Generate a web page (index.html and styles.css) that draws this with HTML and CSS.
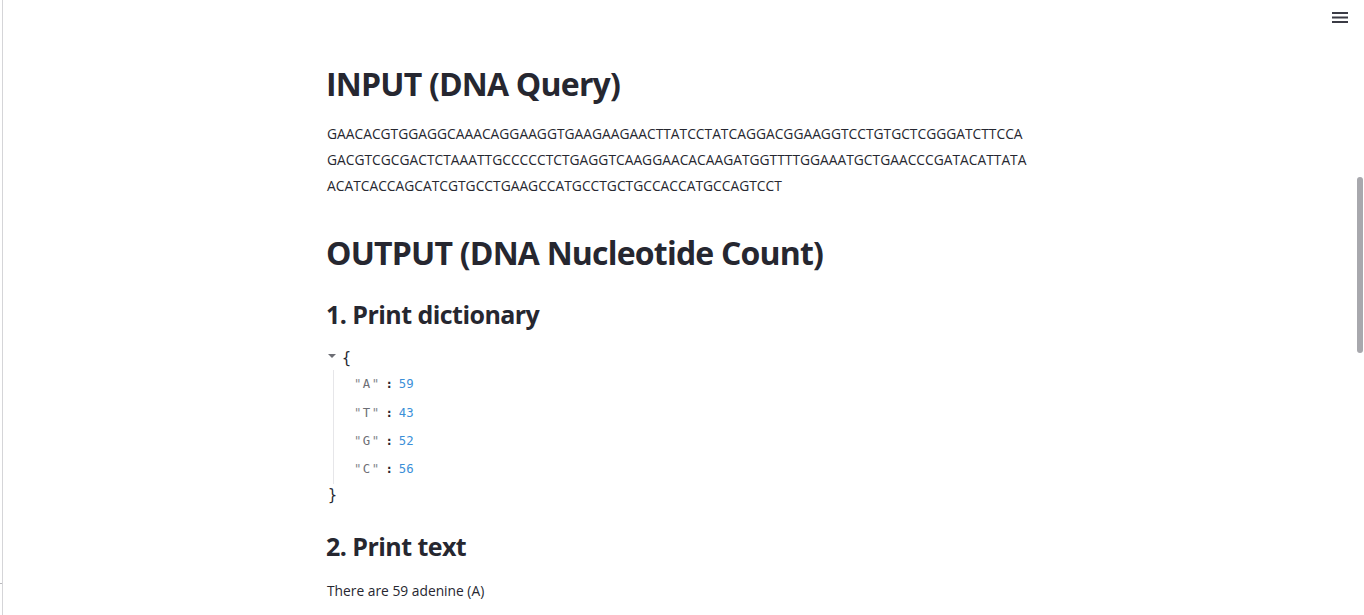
FILE: index.html
```html
<!DOCTYPE html>
<html lang="en">
<head>
<meta charset="utf-8">
<title>DNA Nucleotide Count</title>
<link rel="stylesheet" href="styles.css">
</head>
<body>
<div class="app">
  <div class="sidebar-edge"><span class="edge-tick"></span></div>
  <main class="main">
    <header class="toolbar">
      <button class="menu-btn" aria-label="Main menu">
        <svg width="16" height="11" viewBox="0 0 16 11"><rect x="0" y="0" width="16" height="2"/><rect x="0" y="4.5" width="16" height="2"/><rect x="0" y="9" width="16" height="2"/></svg>
      </button>
    </header>
    <div class="block">
      <h1 class="h1 h1-first">INPUT (DNA Query)</h1>
      <p class="dna">GAACACGTGGAGGCAAACAGGAAGGTGAAGAAGAACTTATCCTATCAGGACGGAAGGTCCTGTGCTCGGGATCTTCCA<br>GACGTCGCGACTCTAAATTGCCCCCTCTGAGGTCAAGGAACACAAGATGGTTTTGGAAATGCTGAACCCGATACATTATA<br>ACATCACCAGCATCGTGCCTGAAGCCATGCCTGCTGCCACCATGCCAGTCCT</p>
      <h1 class="h1 h1-second">OUTPUT (DNA Nucleotide Count)</h1>
      <h3 class="h3 h3-first">1. Print dictionary</h3>
      <div class="json">
        <div class="json-row json-open"><span class="caret"></span><span class="brace">{</span></div>
        <div class="json-children">
          <div class="json-row"><span class="key"><span class="q">"</span>A<span class="q">"</span></span><span class="colon">:</span><span class="num">59</span></div>
          <div class="json-row"><span class="key"><span class="q">"</span>T<span class="q">"</span></span><span class="colon">:</span><span class="num">43</span></div>
          <div class="json-row"><span class="key"><span class="q">"</span>G<span class="q">"</span></span><span class="colon">:</span><span class="num">52</span></div>
          <div class="json-row"><span class="key"><span class="q">"</span>C<span class="q">"</span></span><span class="colon">:</span><span class="num">56</span></div>
        </div>
        <div class="json-row json-close"><span class="brace">}</span></div>
      </div>
      <h3 class="h3 h3-second">2. Print text</h3>
      <p class="text">There are 59 adenine (A)</p>
    </div>
  </main>
  <div class="scrolltrack"><div class="thumb"></div></div>
</div>
</body>
</html>
```
FILE: styles.css
```css
html, body {
  margin: 0;
  padding: 0;
  height: 100%;
  overflow: hidden;
  background: #ffffff;
}
body {
  font-family: "Open Sans", "Noto Sans", sans-serif;
  color: #262730;
}
.app {
  display: flex;
  height: 615px;
}
.sidebar-edge {
  width: 2px;
  border-right: 1px solid #d5d5d8;
  display: flex;
  flex-direction: column;
  justify-content: flex-end;
  padding-bottom: 31px;
  flex: none;
}
.edge-tick {
  display: block;
  width: 2px;
  height: 1px;
  background: #b9b9bd;
}
.main {
  flex: 1;
  position: relative;
  overflow: hidden;
}
.toolbar {
  position: absolute;
  top: 0;
  right: 0;
  height: 40px;
}
.menu-btn {
  border: 0;
  background: transparent;
  padding: 0;
  margin: 12px 7px 0 0;
  display: block;
  line-height: 0;
}
.menu-btn svg {
  fill: #3a3b45;
}
.block {
  width: 704px;
  margin: 0 auto;
  padding-top: 65px;
}
.h1 {
  margin: 0;
  font-size: 32px;
  line-height: 38px;
  font-weight: 700;
  letter-spacing: -0.8px;
  margin-left: -1px;
}
.dna {
  margin: 18px 0 0;
  font-size: 13.8px;
  line-height: 26px;
  word-break: break-all;
}
.h1-second {
  margin-top: 35px;
}
.h3 {
  margin: 0;
  font-size: 25px;
  line-height: 30px;
  font-weight: 700;
  letter-spacing: -0.55px;
  margin-left: -1px;
}
.h3-first {
  margin-top: 27px;
}
.json {
  margin-top: 13px;
  font-family: "DejaVu Sans Mono", monospace;
  font-size: 12.3px;
}
.json-row {
  height: 28.33px;
  line-height: 28.33px;
  display: flex;
  align-items: center;
  white-space: nowrap;
}
.json-open {
  padding-top: 3px;
  height: 25.33px;
}
.caret {
  width: 0;
  height: 0;
  border-left: 4.5px solid transparent;
  border-right: 4.5px solid transparent;
  border-top: 4.5px solid #6d6e75;
  margin: 0 6px 3px 1px;
}
.brace {
  font-weight: 400;
  font-size: 15px;
  color: #262730;
}
.json-children {
  margin-left: 6px;
  border-left: 1px solid #e6e6e9;
  padding-left: 20px;
}
.key {
  color: #6d6e75;
  letter-spacing: 1.4px;
}
.q {
  opacity: 0.85;
}
.colon {
  color: #262730;
  font-weight: 700;
  margin: 0 6px 0 5px;
}
.num {
  color: #3b8fd8;
}
.json-close {
  height: 22px;
  line-height: 22px;
  padding-left: 1px;
}
.h3-second {
  margin-top: 25px;
}
.text {
  margin: 17px 0 0;
  font-size: 13.8px;
  line-height: 26px;
}
.scrolltrack {
  width: 9px;
  flex: none;
  padding-top: 177px;
  box-sizing: border-box;
}
.thumb {
  width: 6px;
  height: 176px;
  margin-left: 2px;
  border-radius: 3px;
  background: #a8a8ad;
}
```
